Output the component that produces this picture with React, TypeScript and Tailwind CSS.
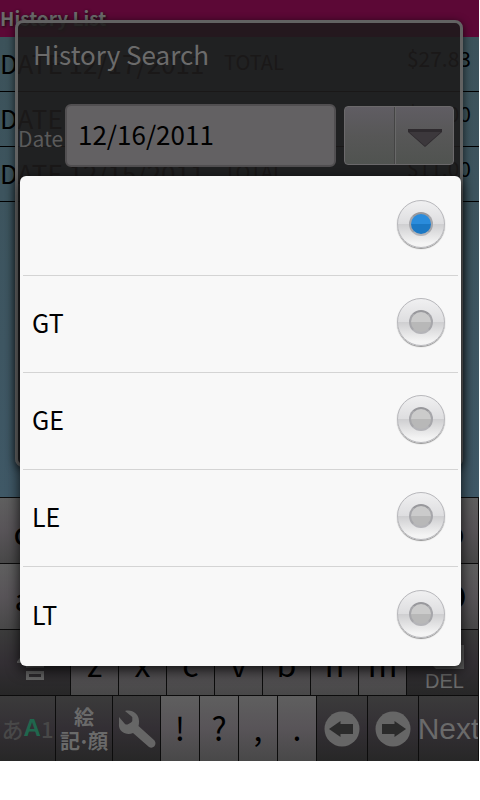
import { ReactNode, useState } from "react";

const jp = "font-['Noto_Sans_CJK_JP',sans-serif]";

const entries = [
  { date: "12/17/2011", amount: "$27.83" },
  { date: "12/16/2011", amount: "$11.00" },
  { date: "12/15/2011", amount: "$11.00" },
];

const options = ["", "GT", "GE", "LE", "LT"];

const lightKey = "bg-linear-to-b from-[#5f5f5f] via-[#585458] to-[#484848] text-black";
const darkKey = "bg-linear-to-b from-[#3b3b3b] via-[#332f34] to-[#272727] text-[#6a6a6a]";

function Key({ children, className, label }: { children: ReactNode; className: string; label?: string }) {
  return (
    <button
      type="button"
      aria-label={label}
      className={`flex min-w-0 items-center justify-center overflow-hidden border-r border-[#0c0c0c] ${className}`}
    >
      {children}
    </button>
  );
}

function Arrow({ flip }: { flip?: boolean }) {
  return (
    <svg viewBox="0 0 36 36" className={flip ? "h-9 w-9 rotate-180" : "h-9 w-9"} aria-hidden="true">
      <circle cx="18" cy="18" r="17.5" fill="#666666" />
      <path d="M5 18 16.500 10v3H29v10H16.500v3z" fill="#2b2b2b" />
    </svg>
  );
}

function Keyboard() {
  return (
    <div className="flex flex-col bg-[#0c0c0c] text-[32px] leading-9">
      <div className="flex h-[66px] border-t border-[#0c0c0c]">
        {"qwertyuiop".split("").map((c) => (
          <Key key={c} className={`flex-1 ${lightKey}`}>{c}</Key>
        ))}
      </div>
      <div className="flex h-[66px] border-t border-[#0c0c0c]">
        {"asdfghjkl".split("").map((c) => (
          <Key key={c} className={`flex-1 ${lightKey}`}>{c}</Key>
        ))}
        <Key className={`flex-1 pb-3 text-[40px] ${lightKey}`}>o</Key>
      </div>
      <div className="flex h-[66px] border-t border-[#0c0c0c]">
        <Key label="Shift" className={`w-[71px] pb-1 ${darkKey}`}>
          <svg viewBox="0 0 36 44" className="h-11 w-9" fill="none" stroke="#666666" strokeWidth="3" aria-hidden="true">
            <path d="M18 3 2 22.500h8.500V27h15v-4.500H34z" />
            <path d="M10.500 33.500h15v6h-15z" />
          </svg>
        </Key>
        {"zxcvbnm".split("").map((c) => (
          <Key key={c} className={`flex-1 ${lightKey}`}>{c}</Key>
        ))}
        <Key className={`w-[72px] flex-col justify-end pb-0.5 pl-1 text-[20px] leading-6 ${darkKey}`}>
          <svg viewBox="0 0 42 24" className="h-6 w-[42px] shrink-0" aria-hidden="true">
            <path d="M0 12 12 0h28v24H12z" fill="#5c5c5c" />
          </svg>
          <span className="font-['Liberation_Sans',sans-serif]">DEL</span>
        </Key>
      </div>
      <div className="flex h-[66px] border-t border-[#0c0c0c]">
        <Key className={`w-14 pb-0.5 text-[22px] font-medium ${darkKey}`}>
          <span className="text-[#484848]">あ</span>
          <span className="font-['Liberation_Sans',sans-serif] text-[24px] font-bold text-[#20664d]">A</span>
          <span className="text-[#484848]">1</span>
        </Key>
        <Key className={`w-[57px] flex-col text-[20px] leading-6 font-bold ${darkKey}`}>
          <span>絵</span>
          <span className="flex">
            <span>記</span>
            <span className="flex w-2 justify-center">·</span>
            <span>顔</span>
          </span>
        </Key>
        <Key label="Settings" className={`w-12 ${darkKey}`}>
          <svg viewBox="0 0 38 38" className="h-[38px] w-[38px]" aria-hidden="true">
            <path
              d="M7 1C14-1 21 4 21 11c0 2 0 3-.5 5L36 30c4 4-1 10-5 7L15 23C8 26 0 21 1 14V7l6 7c1 .6 2 .6 3 .3l3-1.800c1-.6 1.400-1.500 1.300-2.500V7z"
              fill="#666666"
            />
          </svg>
        </Key>
        {["!", "?", ",", "."].map((c) => (
          <Key key={c} className={`w-[39px] pb-1 ${lightKey}`}>{c}</Key>
        ))}
        <Key label="Left" className={`w-[51px] ${darkKey}`}><Arrow /></Key>
        <Key label="Right" className={`w-[51px] ${darkKey}`}><Arrow flip /></Key>
        <Key className={`flex-1 font-['Liberation_Sans',sans-serif] text-[30px] ${darkKey}`}>Next</Key>
      </div>
    </div>
  );
}

function SearchDialog() {
  return (
    <section className="absolute top-5 right-[17px] left-[15px] h-[447px] rounded-lg border-[3px] border-[#626262] bg-[rgba(29,27,27,0.89)] shadow-[0_2px_8px_rgba(0,0,0,0.7)]">
      <h2 className="px-[15px] pt-[11px] text-[26px] leading-10 text-[#6b6b6b]">History Search</h2>
      <div className="flex items-center pt-[30px] pr-[6px]">
        <label htmlFor="date" className="w-[47px] pt-1 text-[21px] leading-8 text-[#5a5a5a]">Date</label>
        <input
          id="date"
          defaultValue="12/16/2011"
          className="h-[63px] min-w-0 flex-1 rounded-md border-2 border-[#514f51] bg-[#636163] px-[11px] pb-1 text-[26px] text-black"
        />
        <button
          type="button"
          aria-label="Comparison"
          className="ml-2 flex h-[59px] w-[110px] rounded border border-[#6b696b] bg-linear-to-b from-[#605d63] via-[#575757] to-[#505350]"
        >
          <span className="h-full w-[50px] border-r border-[#444444]" />
          <span className="flex h-full flex-1 items-center justify-center border-l border-[#686868] pt-1">
            <svg viewBox="0 0 34 18" className="h-[18px] w-[34px]" aria-hidden="true">
              <path d="M0 0h34v3L17 18 0 3z" fill="#2e2a2e" />
              <path d="M1 3h32L17 17z" fill="#3c383c" />
            </svg>
          </span>
        </button>
      </div>
    </section>
  );
}

function OptionList() {
  const [selected, setSelected] = useState("");
  return (
    <div
      role="radiogroup"
      aria-label="Comparison"
      className="absolute top-44 right-[19px] left-5 rounded-md bg-[#f8f8f8] px-[3px] pb-0.5 shadow-[0_4px_14px_rgba(0,0,0,0.85)]"
    >
      {options.map((o) => (
        <label
          key={o}
          className="flex h-[97px] items-center justify-between border-b border-[#d4d4d4] pr-[13px] pb-1 pl-[9px] text-[25px] text-black first:h-[100px] last:border-b-0"
        >
          <span className="pt-0.5">{o}</span>
          <span className="relative h-12 w-12">
            <input
              type="radio"
              name="comparison"
              aria-label={o || "None"}
              checked={selected === o}
              onChange={() => setSelected(o)}
              className="peer block h-12 w-12 appearance-none rounded-full border border-[#b8b8bc] bg-[linear-gradient(#f0f0f1,#dedee0_49%,#cfcfd1_51%,#f4f4f4_92%)] shadow-[0_1px_1px_#909090]"
            />
            <span className="pointer-events-none absolute top-3 left-3 h-6 w-6 rounded-full border-2 border-t-[#98989c] border-r-[#a6a6aa] border-b-[#b4b4b8] border-l-[#a6a6aa] bg-[linear-gradient(#cbcbcb_50%,#b8b8b8_50%)] peer-checked:bg-[linear-gradient(#2a8cdc_50%,#1b78c4_50%)]" />
          </span>
        </label>
      ))}
    </div>
  );
}

export default function App() {
  return (
    <div className={`relative w-full overflow-hidden bg-white pr-px ${jp}`}>
      <header className="h-[37px] bg-[#5c0836] text-[19px] leading-9 font-bold text-[#6b6b6b] text-shadow-[1px_1px_3px_#111111]">
        <h1>History List</h1>
      </header>
      <main className="h-[460px] bg-linear-to-b from-[#3c525a] to-[#3f5866]">
        <ul>
          {entries.map((e) => (
            <li key={e.date} className="flex h-[55px] items-center border-b border-black pr-2 pb-1 text-black">
              <span className="w-56 text-[26px]">DATE {e.date}</span>
              <span className="text-[20px]">TOTAL</span>
              <span className="ml-auto pb-1.5 text-[21px]">{e.amount}</span>
            </li>
          ))}
        </ul>
      </main>
      <Keyboard />
      <SearchDialog />
      <OptionList />
    </div>
  );
}
